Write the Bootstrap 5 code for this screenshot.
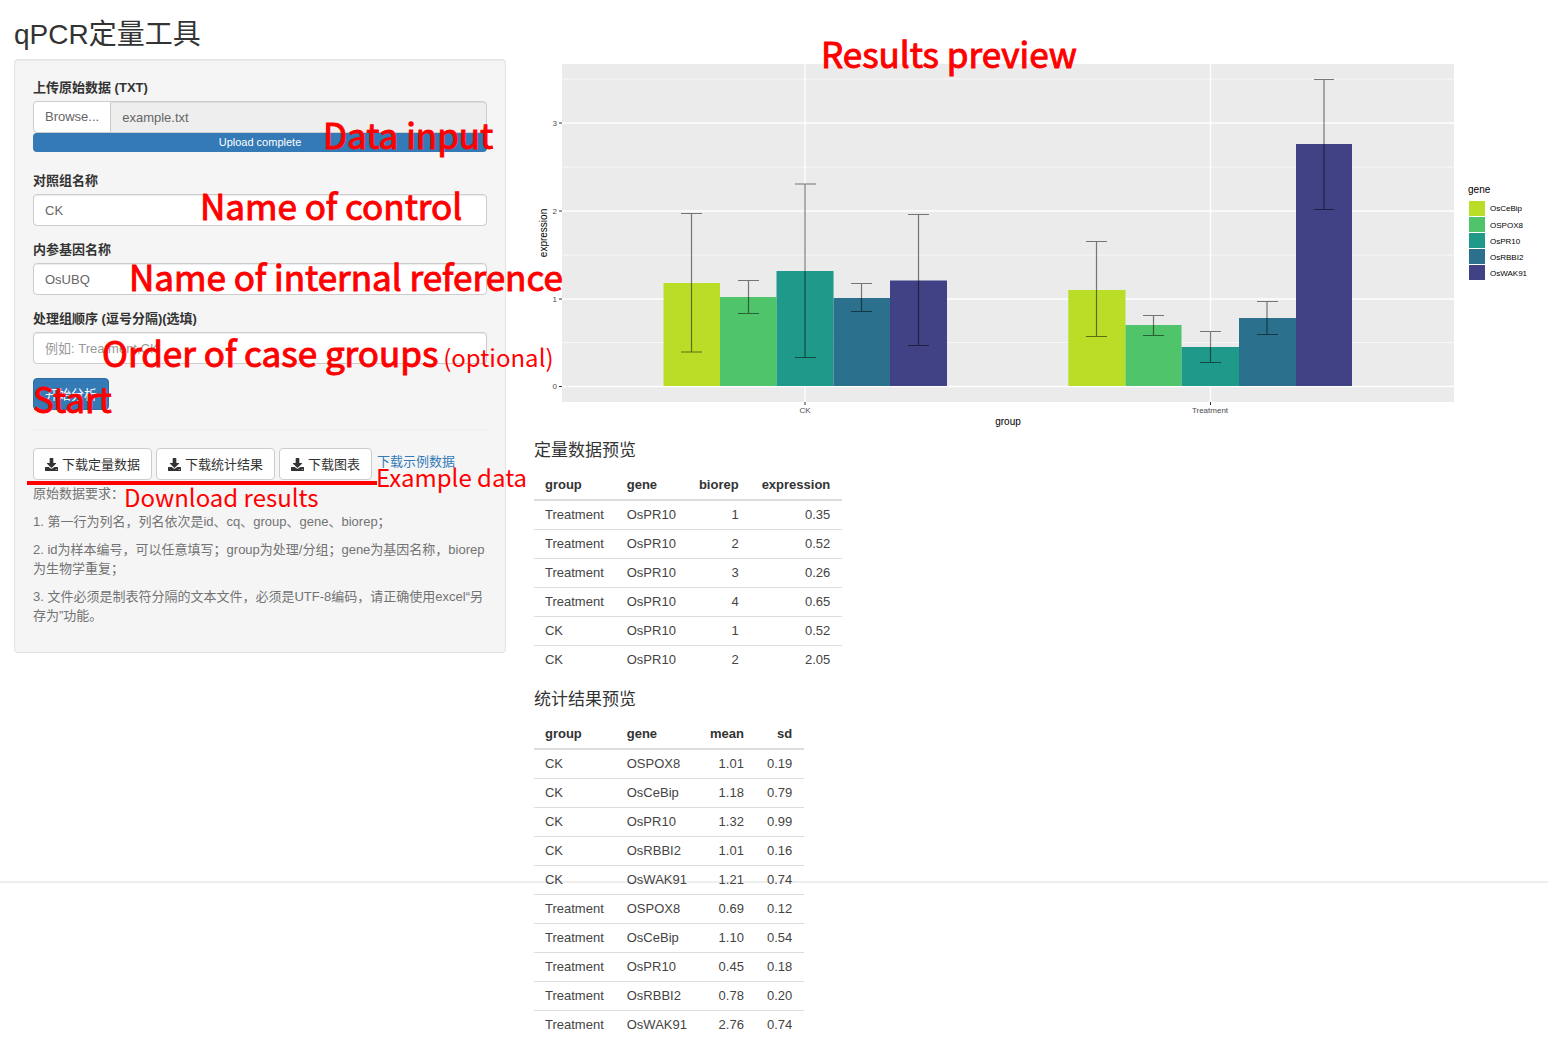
<!DOCTYPE html>
<html lang="zh-CN">
<head>
<meta charset="utf-8">
<meta name="viewport" content="width=device-width, initial-scale=1">
<title>qPCR定量工具</title>
<link href="https://cdn.jsdelivr.net/npm/bootstrap@5.3.0/dist/css/bootstrap.min.css" rel="stylesheet">
<style>
  body { font-family: "Liberation Sans", "Noto Sans CJK SC", sans-serif; font-size: 13px; line-height: 19px; color: #333; background: #fff; }
  .app { --bs-gutter-x: 28px; padding-bottom: 16px; }
  .app > .row { --bs-gutter-x: 28px; }
  .app-title { font-size: 28px; line-height: 31px; font-weight: 400; margin: 19px 0 9px; }
  .side-col { flex: 0 0 auto; width: calc(100% / 3 + 4px); }
  .well { background: #f5f5f5; border: 1px solid #e3e3e3; border-radius: 4px; padding: 18px 18px; box-shadow: inset 0 1px 1px rgba(0,0,0,.05); }
  .field { margin-bottom: 14px; }
  .field > label { display: block; font-weight: 700; margin-bottom: 4px; }
  .form-control { height: 32px; padding: 5px 11px; font-size: 13px; line-height: 19px; color: #666; border-color: #ccc; border-radius: 4px; box-shadow: inset 0 1px 1px rgba(0,0,0,.075); }
  .form-control::placeholder { color: #999; }
  .file-name, .file-name:focus { background: #eee; }
  .btn { font-size: 13px; line-height: 19px; height: 32px; padding: 5px 11px; border-radius: 4px; }
  .btn-plain { --bs-btn-bg: #fff; --bs-btn-color: #333; --bs-btn-border-color: #ccc; --bs-btn-hover-bg: #e6e6e6; --bs-btn-hover-border-color: #adadad; }
  .browse { --bs-btn-color: #666; }
  .btn-run { --bs-btn-bg: #337ab7; --bs-btn-color: #fff; --bs-btn-border-color: #2e6da4; --bs-btn-hover-bg: #286090; --bs-btn-hover-color: #fff; }
  .progress { height: 19px; margin-bottom: 19px; border-radius: 4px; background: #f5f5f5; font-size: 11px; }
  .progress-bar { background: #337ab7; }
  .well hr { margin: 19px 0 18px; border-color: #eee; opacity: 1; }
  .downloads { gap: 4px; margin-bottom: 4px; }
  .sample-link { color: #337ab7; padding: 4px 0 0 1px; text-decoration: none; }
  .help p { color: #737373; margin-bottom: 9px; }
  .plot { margin-bottom: 10px; }
  .plot text { font-family: "Liberation Sans", sans-serif; }
  .preview-title { font-size: 17px; line-height: 19px; font-weight: 400; margin-bottom: 11px; }
  .data-table { width: auto; margin-bottom: 16px; line-height: 18px; color: #333; --bs-table-bg: transparent; }
  .data-table > :not(caption) > * > * { padding: 5px 12px 5px 11px; border-bottom: 0; border-top: 1px solid #ddd; color: #444; }
  .data-table > thead > tr > th { border-top: 0; border-bottom: 2px solid #ddd; color: #333; }
  .data-table > tbody > tr:first-child > td { border-top: 0; }
  .seam { position: absolute; top: 881px; left: 0; right: 0; margin: 0; border-top: 2px solid #eee; opacity: 1; z-index: -1; }
  .note { position: absolute; z-index: 5; color: #f00; font-family: "Noto Sans CJK SC", sans-serif; font-size: 35px; line-height: 35px; white-space: nowrap; pointer-events: none; -webkit-text-stroke: 1px #f00; }
  .note-sm { font-size: 24px; line-height: 24px; -webkit-text-stroke: 0; }
  .note small { font-size: 24px; margin-left: -3px; -webkit-text-stroke: 0; }
  .n-results { left: 821px; top: 35px; }
  .n-input { left: 323px; top: 116px; }
  .n-control { left: 200px; top: 187px; }
  .n-reference { left: 129px; top: 258px; }
  .n-order { left: 102px; top: 334px; }
  .n-start { left: 33px; top: 380px; }
  .n-download { left: 124px; top: 485px; }
  .n-example { left: 376px; top: 465px; }
  .n-rule { position: absolute; z-index: 5; left: 27px; top: 481px; width: 350px; height: 4px; background: #f00; }
</style>
</head>
<body class="position-relative min-vh-100">
<svg class="d-none" aria-hidden="true">
  <symbol id="dl" viewBox="0 0 512 512"><path fill="currentColor" d="M208 0h96a24 24 0 0 1 24 24v168h88c18 0 27 22 14 34L278 378c-12 12-31 12-44 0L82 226c-13-12-4-34 14-34h88V24a24 24 0 0 1 24-24z"/><path fill="currentColor" d="M24 352h122l62 55c28 25 68 25 96 0l62-55h122a24 24 0 0 1 24 24v112a24 24 0 0 1-24 24H24a24 24 0 0 1-24-24V376a24 24 0 0 1 24-24zm416 84a20 20 0 1 0 0 40 20 20 0 0 0 0-40z"/></symbol>
</svg>

<main class="container-fluid app">
  <h1 class="app-title">qPCR定量工具</h1>
  <div class="row">
    <div class="side-col">
      <form class="well" onsubmit="return false">
        <label class="d-block fw-bold mb-1" for="fileName">上传原始数据 (TXT)</label>
        <div class="input-group flex-nowrap">
          <label class="btn btn-plain browse" for="rawFile">Browse...</label>
          <input class="visually-hidden" type="file" id="rawFile" accept=".txt" tabindex="-1">
          <input class="form-control file-name" type="text" id="fileName" value="example.txt" readonly>
        </div>
        <div class="progress" role="progressbar" aria-label="Upload" aria-valuenow="100" aria-valuemin="0" aria-valuemax="100">
          <div class="progress-bar w-100">Upload complete</div>
        </div>
        <div class="field"><label for="ctrl">对照组名称</label><input class="form-control" id="ctrl" type="text" value="CK"></div>
        <div class="field"><label for="refGene">内参基因名称</label><input class="form-control" id="refGene" type="text" value="OsUBQ"></div>
        <div class="field"><label for="order">处理组顺序 (逗号分隔)(选填)</label><input class="form-control" id="order" type="text" placeholder="例如: Treatment,CK"></div>
        <button class="btn btn-run d-block" type="button">开始分析</button>
        <hr>
        <div class="d-flex flex-wrap align-items-start downloads">
          <button class="btn btn-plain d-flex align-items-center gap-1" type="button"><svg width="13" height="13" aria-hidden="true"><use href="#dl"/></svg>下载定量数据</button>
          <button class="btn btn-plain d-flex align-items-center gap-1" type="button"><svg width="13" height="13" aria-hidden="true"><use href="#dl"/></svg>下载统计结果</button>
          <button class="btn btn-plain d-flex align-items-center gap-1" type="button"><svg width="13" height="13" aria-hidden="true"><use href="#dl"/></svg>下载图表</button>
          <a class="sample-link" href="#">下载示例数据</a>
        </div>
        <div class="help">
          <p>原始数据要求：</p>
          <p>1. 第一行为列名，列名依次是id、cq、group、gene、biorep；</p>
          <p>2. id为样本编号，可以任意填写；group为处理/分组；gene为基因名称，biorep为生物学重复；</p>
          <p>3. 文件必须是制表符分隔的文本文件，必须是UTF-8编码，请正确使用excel“另存为”功能。</p>
        </div>
      </form>
    </div>

    <div class="col">
      <svg class="plot d-block w-100" viewBox="0 0 1000 372" role="img" aria-label="expression by group and gene">
        <rect x="28" y="5" width="892" height="338" fill="#ebebeb"/>
        <g stroke="#fff" stroke-width="1" opacity=".6">
          <path d="M28 20H920M28 108H920M28 196H920M28 283.5H920"/>
        </g>
        <g stroke="#fff" stroke-width="1.3">
          <path d="M28 64H920M28 152H920M28 240H920M28 327.5H920M271 5V343M676.5 5V343"/>
        </g>
        <path d="M25 64H28M25 152H28M25 240H28M25 327.5H28M271 343V346M676.5 343V346" stroke="#333"/>
        <g fill="#bade28"><path d="M129.500 224H186V327H129.500zM534.300 231H591.500V327H534.300z"/></g>
        <g fill="#50c46a"><path d="M186 238H242.500V327H186zM591.500 266H647.500V327H591.500z"/></g>
        <g fill="#1f9a8a"><path d="M242.500 212H299.500V327H242.500zM647.500 288H705V327H647.500z"/></g>
        <g fill="#2b718e"><path d="M299.500 239H356V327H299.500zM705 259H762V327H705z"/></g>
        <g fill="#414285"><path d="M356 221.500H413V327H356zM762 85H818V327H762z"/></g>
        <g stroke="#000" stroke-width="1.2" opacity=".5" fill="none">
          <path d="M147 154.500H168M157.500 154.500V293M147 293H168"/>
          <path d="M204 221.500H225M214.500 221.500V254.500M204 254.500H225"/>
          <path d="M261 125H282M271 125V298.500M261 298.500H282"/>
          <path d="M317 224.500H338M327.500 224.500V252.500M317 252.500H338"/>
          <path d="M374 155.500H395M384.500 155.500V286.500M374 286.500H395"/>
          <path d="M552 182.500H573M562.500 182.500V277.500M552 277.500H573"/>
          <path d="M609 256.500H630M619.500 256.500V276.500M609 276.500H630"/>
          <path d="M666 272.500H687M676.500 272.500V303.500M666 303.500H687"/>
          <path d="M723 242.500H744M733 242.500V275.500M723 275.500H744"/>
          <path d="M780 20.500H800M790 20.500V150.500M780 150.500H800"/>
        </g>
        <g font-size="8" fill="#4d4d4d">
          <g text-anchor="end"><text x="23" y="67">3</text><text x="23" y="155">2</text><text x="23" y="243">1</text><text x="23" y="330">0</text></g>
          <g text-anchor="middle"><text x="271" y="354">CK</text><text x="676" y="354">Treatment</text></g>
        </g>
        <g font-size="10" fill="#000">
          <text x="474" y="366" text-anchor="middle">group</text>
          <text transform="translate(13 174) rotate(-90)" text-anchor="middle">expression</text>
          <text x="934" y="134">gene</text>
        </g>
        <rect x="935" y="142" width="16" height="15" fill="#bade28"/>
        <rect x="935" y="158" width="16" height="15" fill="#50c46a"/>
        <rect x="935" y="174" width="16" height="15" fill="#1f9a8a"/>
        <rect x="935" y="190" width="16" height="15" fill="#2b718e"/>
        <rect x="935" y="206" width="16" height="15" fill="#414285"/>
        <g font-size="8" fill="#000"><text x="956" y="152">OsCeBip</text><text x="956" y="169">OSPOX8</text><text x="956" y="185">OsPR10</text><text x="956" y="201">OsRBBI2</text><text x="956" y="217">OsWAK91</text></g>
      </svg>

      <h2 class="preview-title">定量数据预览</h2>
      <table class="table data-table">
        <thead><tr><th>group</th><th>gene</th><th class="text-end">biorep</th><th class="text-end">expression</th></tr></thead>
        <tbody>
          <tr><td>Treatment</td><td>OsPR10</td><td class="text-end">1</td><td class="text-end">0.35</td></tr>
          <tr><td>Treatment</td><td>OsPR10</td><td class="text-end">2</td><td class="text-end">0.52</td></tr>
          <tr><td>Treatment</td><td>OsPR10</td><td class="text-end">3</td><td class="text-end">0.26</td></tr>
          <tr><td>Treatment</td><td>OsPR10</td><td class="text-end">4</td><td class="text-end">0.65</td></tr>
          <tr><td>CK</td><td>OsPR10</td><td class="text-end">1</td><td class="text-end">0.52</td></tr>
          <tr><td>CK</td><td>OsPR10</td><td class="text-end">2</td><td class="text-end">2.05</td></tr>
        </tbody>
      </table>

      <h2 class="preview-title">统计结果预览</h2>
      <table class="table data-table mb-0">
        <thead><tr><th>group</th><th>gene</th><th class="text-end">mean</th><th class="text-end">sd</th></tr></thead>
        <tbody>
          <tr><td>CK</td><td>OSPOX8</td><td class="text-end">1.01</td><td class="text-end">0.19</td></tr>
          <tr><td>CK</td><td>OsCeBip</td><td class="text-end">1.18</td><td class="text-end">0.79</td></tr>
          <tr><td>CK</td><td>OsPR10</td><td class="text-end">1.32</td><td class="text-end">0.99</td></tr>
          <tr><td>CK</td><td>OsRBBI2</td><td class="text-end">1.01</td><td class="text-end">0.16</td></tr>
          <tr><td>CK</td><td>OsWAK91</td><td class="text-end">1.21</td><td class="text-end">0.74</td></tr>
          <tr><td>Treatment</td><td>OSPOX8</td><td class="text-end">0.69</td><td class="text-end">0.12</td></tr>
          <tr><td>Treatment</td><td>OsCeBip</td><td class="text-end">1.10</td><td class="text-end">0.54</td></tr>
          <tr><td>Treatment</td><td>OsPR10</td><td class="text-end">0.45</td><td class="text-end">0.18</td></tr>
          <tr><td>Treatment</td><td>OsRBBI2</td><td class="text-end">0.78</td><td class="text-end">0.20</td></tr>
          <tr><td>Treatment</td><td>OsWAK91</td><td class="text-end">2.76</td><td class="text-end">0.74</td></tr>
        </tbody>
      </table>
    </div>
  </div>
</main>

<hr class="seam">
<div class="note n-results">Results preview</div>
<div class="note n-input">Data input</div>
<div class="note n-control">Name of control</div>
<div class="note n-reference">Name of internal reference</div>
<div class="note n-order">Order of case groups <small>(optional)</small></div>
<div class="note n-start">Start</div>
<div class="n-rule"></div>
<div class="note note-sm n-download">Download results</div>
<div class="note note-sm n-example">Example data</div>
<script src="https://cdn.jsdelivr.net/npm/bootstrap@5.3.0/dist/js/bootstrap.bundle.min.js"></script>
</body>
</html>
